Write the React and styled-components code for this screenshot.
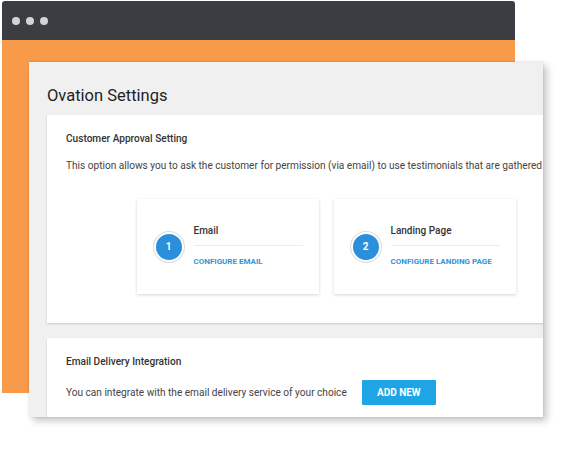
import React from 'react'
import styled, { createGlobalStyle } from 'styled-components';

const GlobalStyle = createGlobalStyle`
  html, body {
    margin: 0;
    padding: 0;
    background: #fff;
    font-family: Roboto, "Liberation Sans", Arial, sans-serif;
  }
`;

const steps = [
  { num: 1, title: 'Email', link: 'CONFIGURE EMAIL' },
  { num: 2, title: 'Landing Page', link: 'CONFIGURE LANDING PAGE' },
];

function StepCard({ num, title, link }) {
  return (
    <Step>
      <Badge>{num}</Badge>
      <StepBody>
        <StepTitle>{title}</StepTitle>
        <StepLink>{link}</StepLink>
      </StepBody>
    </Step>
  );
}

function App() {
  return (
    <Stage>
      <GlobalStyle />
      <Browser>
        <TopBar>
          <Dot />
          <Dot />
          <Dot />
        </TopBar>
        <Backdrop />
      </Browser>

      {/* settings screenshot laid over the browser mock */}
      <Panel>
        <Title>Ovation Settings</Title>
        <Section>
          <SectionTitle>Customer Approval Setting</SectionTitle>
          <Text>
            This option allows you to ask the customer for permission (via email) to use testimonials that are gathered
          </Text>
          <Steps>
            {steps.map((s) => (
              <StepCard key={s.num} {...s} />
            ))}
          </Steps>
        </Section>
        <Section $bottom>
          <SectionTitle>Email Delivery Integration</SectionTitle>
          <Inline>
            <Text>You can integrate with the email delivery service of your choice</Text>
            <Button>ADD NEW</Button>
          </Inline>
        </Section>
      </Panel>
    </Stage>
  )
}

export default App;

const Stage = styled.div`
  position: relative;
  width: 587px;
  height: 449px;
  overflow: hidden;
  padding: 1px 0 0 2px;
  box-sizing: border-box;
`;

const Browser = styled.div`
  width: 513px;
  display: flex;
  flex-direction: column;
`;

const TopBar = styled.div`
  height: 39px;
  background: #3a3d42;
  border-radius: 3px 3px 0 0;
  display: flex;
  align-items: center;
  gap: 6px;
  padding-left: 10px;
`;

const Dot = styled.span`
  width: 8px;
  height: 8px;
  border-radius: 50%;
  background: #d4d4d4;
`;

const Backdrop = styled.div`
  height: 353px;
  background: #f79b4a;
`;

const Panel = styled.div`
  position: absolute;
  left: 29px;
  top: 62px;
  width: 514px;
  height: 355px;
  background: #f0f0f0;
  overflow: hidden;
  padding-left: 18px;
  box-sizing: border-box;
  box-shadow: 4px 4px 7px rgba(0, 0, 0, 0.22), 0 0 2px rgba(0, 0, 0, 0.12);
`;

const Title = styled.h1`
  margin: 0;
  height: 53px;
  box-sizing: border-box;
  padding-top: 24px;
  font-size: 16.5px;
  font-weight: 400;
  color: #1e1e1e;
  line-height: 20px;
`;

const Section = styled.div`
  width: 558px;
  background: #fff;
  box-shadow: 0 1px 2px rgba(0, 0, 0, 0.16);
  padding: 17px 19px ${(p) => (p.$bottom ? '40px' : '29px')};
  box-sizing: border-box;
  margin-bottom: 15px;
`;

const SectionTitle = styled.div`
  font-size: 10.1px;
  font-weight: 500;
  color: #333;
  line-height: 13px;
`;

const Text = styled.div`
  margin-top: 14px;
  font-size: 10.1px;
  color: #444;
  line-height: 13px;
  white-space: nowrap;
`;

const Steps = styled.div`
  display: flex;
  justify-content: center;
  gap: 15px;
  margin-top: 27px;
  margin-left: -19px;
  margin-right: -19px;
`;

const Step = styled.div`
  width: 182px;
  height: 95px;
  background: #fff;
  box-shadow: 0 1px 3px rgba(0, 0, 0, 0.17);
  display: flex;
  align-items: center;
  padding-left: 17px;
  box-sizing: border-box;
  gap: 10px;
`;

const Badge = styled.div`
  width: 26px;
  height: 26px;
  border-radius: 50%;
  background: #2b8fdc;
  border: 2px solid #fff;
  box-shadow: 0 0 0 1px #dcdcdc;
  color: #fff;
  font-size: 10px;
  font-weight: 700;
  display: flex;
  align-items: center;
  justify-content: center;
  flex-shrink: 0;
`;

const StepBody = styled.div`
  width: 109px;
  margin-top: -3px;
`;

const StepTitle = styled.div`
  font-size: 10px;
  font-weight: 500;
  color: #333;
  line-height: 13px;
  padding-bottom: 8px;
  border-bottom: 1px solid #ececec;
`;

const StepLink = styled.div`
  margin-top: 11px;
  font-size: 8px;
  font-weight: 700;
  color: #2d96dd;
  line-height: 10px;
  white-space: nowrap;
`;

const Inline = styled.div`
  display: flex;
  align-items: center;
  gap: 15px;
  margin-top: 12px;
  ${Text} {
    margin-top: 0;
  }
`;

const Button = styled.button`
  width: 74px;
  height: 25px;
  border: none;
  border-radius: 1px;
  background: #1fa5e6;
  color: #fff;
  font-family: inherit;
  font-size: 10px;
  font-weight: 700;
  padding: 0;
`;
